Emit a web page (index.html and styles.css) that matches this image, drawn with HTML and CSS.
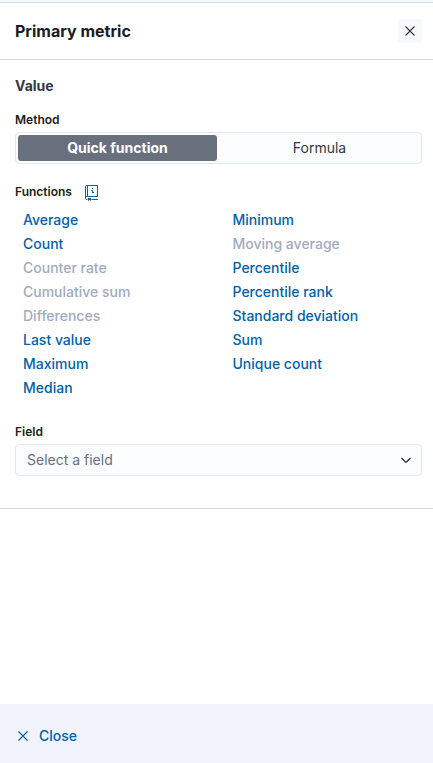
FILE: index.html
```html
<!DOCTYPE html>
<html lang="en">
<head>
<meta charset="utf-8">
<title>Primary metric</title>
<link rel="stylesheet" href="styles.css">
</head>
<body>
<section class="flyout">
  <header class="header">
    <h2 class="title">Primary metric</h2>
    <button class="icon-button" aria-label="Close"><svg width="16" height="16" viewBox="0 0 16 16"><path d="M3.500 3.500l9 9m0-9l-9 9"/></svg></button>
  </header>
  <main class="body">
    <h3 class="section-title">Value</h3>
    <div class="label method-label">Method</div>
    <div class="button-group">
      <button class="segment selected">Quick function</button>
      <button class="segment">Formula</button>
    </div>
    <div class="label functions-label">Functions
      <svg class="docs" width="16" height="16" viewBox="0 0 16 16"><path d="M3.500.5h10v11h-10zM3.500.5h-1a1 1 0 0 0-1 1v12a1 1 0 0 0 1 1h1m-2-2a1 1 0 0 1 1-1h1M7.500 14.500h6.500M7.200 5.500h1.300v2.500M8 7.500h2M8 3.500h1"/><path class="bookmark" d="M4 13h3v3l-1.500-1L4 16z"/></svg>
    </div>
    <ul class="functions">
      <li>Average</li><li>Count</li><li class="disabled">Counter rate</li><li class="disabled">Cumulative sum</li><li class="disabled">Differences</li><li>Last value</li><li>Maximum</li><li>Median</li>
      <li>Minimum</li><li class="disabled">Moving average</li><li>Percentile</li><li>Percentile rank</li><li>Standard deviation</li><li>Sum</li><li>Unique count</li>
    </ul>
    <div class="label field-label">Field</div>
    <div class="select">Select a field <svg width="16" height="16" viewBox="0 0 16 16"><path d="M3.500 6l3.800 3.800q.7.700 1.400 0L12.500 6"/></svg></div>
  </main>
  <footer class="footer">
    <button class="close"><svg width="16" height="16" viewBox="0 0 16 16"><path d="M3.500 3.500l9 9m0-9l-9 9"/></svg>Close</button>
  </footer>
</section>
</body>
</html>
```
FILE: styles.css
```css
* { box-sizing: border-box; }
body { margin: 0; font: 14px/24px Inter, sans-serif; color: #343741; background: #fff; }
button { font: inherit; color: inherit; border: 0; padding: 0; background: none; }
svg { fill: none; stroke: currentColor; stroke-width: 1.1; flex: none; }
.flyout { height: 763px; padding-top: 2px; display: flex; flex-direction: column; background: linear-gradient(#f7f8fc 2px, #fff 2px); }
.header { height: 58px; padding: 0 11px 0 15px; display: flex; align-items: center; justify-content: space-between; border-top: 1px solid #d3dae6; border-bottom: 1px solid #d3dae6; }
.title { margin: 0; font-size: 16px; font-weight: 700; color: #1a1c21; }
.icon-button { width: 24px; height: 24px; display: grid; place-items: center; background: #f7f8fa; border-radius: 4px; }
.body { height: 449px; padding: 14px 11px 0 15px; border-bottom: 1px solid #d3dae6; }
.section-title { margin: 0; font-size: 14px; font-weight: 700; }
.label { font-size: 12px; line-height: 18px; font-weight: 600; color: #1a1c21; }
.method-label { margin-top: 13px; }
.button-group { height: 32px; margin-top: 3px; display: grid; grid-template-columns: 199px 1fr; padding: 2px; border: 1px solid #e3e7f1; border-radius: 4px; background: #fbfcfd; }
.segment { padding-left: 3px; }
.selected { padding-left: 0; background: #69707d; color: #fff; font-weight: 700; border-radius: 3px; }
.functions-label { height: 18px; margin-top: 19px; display: flex; align-items: center; gap: 12px; }
.docs { color: #0061a6; stroke-width: 1; margin-top: 2px; }
.bookmark { fill: currentColor; stroke: none; }
.functions { list-style: none; margin: 7px 0 0; padding: 0 0 0 8px; display: grid; grid-template: repeat(8, 24px) / 209.5px 1fr; grid-auto-flow: column; color: #0061a6; font-weight: 500; }
.disabled { color: #a2abba; }
.field-label { margin-top: 23px; }
.select { height: 32px; margin-top: 3px; padding: 0 7px 0 11px; display: flex; align-items: center; justify-content: space-between; border: 1px solid #e3e7f1; border-radius: 4px; background: #fbfcfd; color: #69707d; }
.select svg { color: #343741; stroke-width: 1.3; }
.footer { height: 59px; margin-top: auto; padding: 4px 15px 0; display: flex; align-items: center; background: #f0f3fb; }
.close { display: flex; align-items: center; gap: 8px; color: #0061a6; font-weight: 500; }
```
